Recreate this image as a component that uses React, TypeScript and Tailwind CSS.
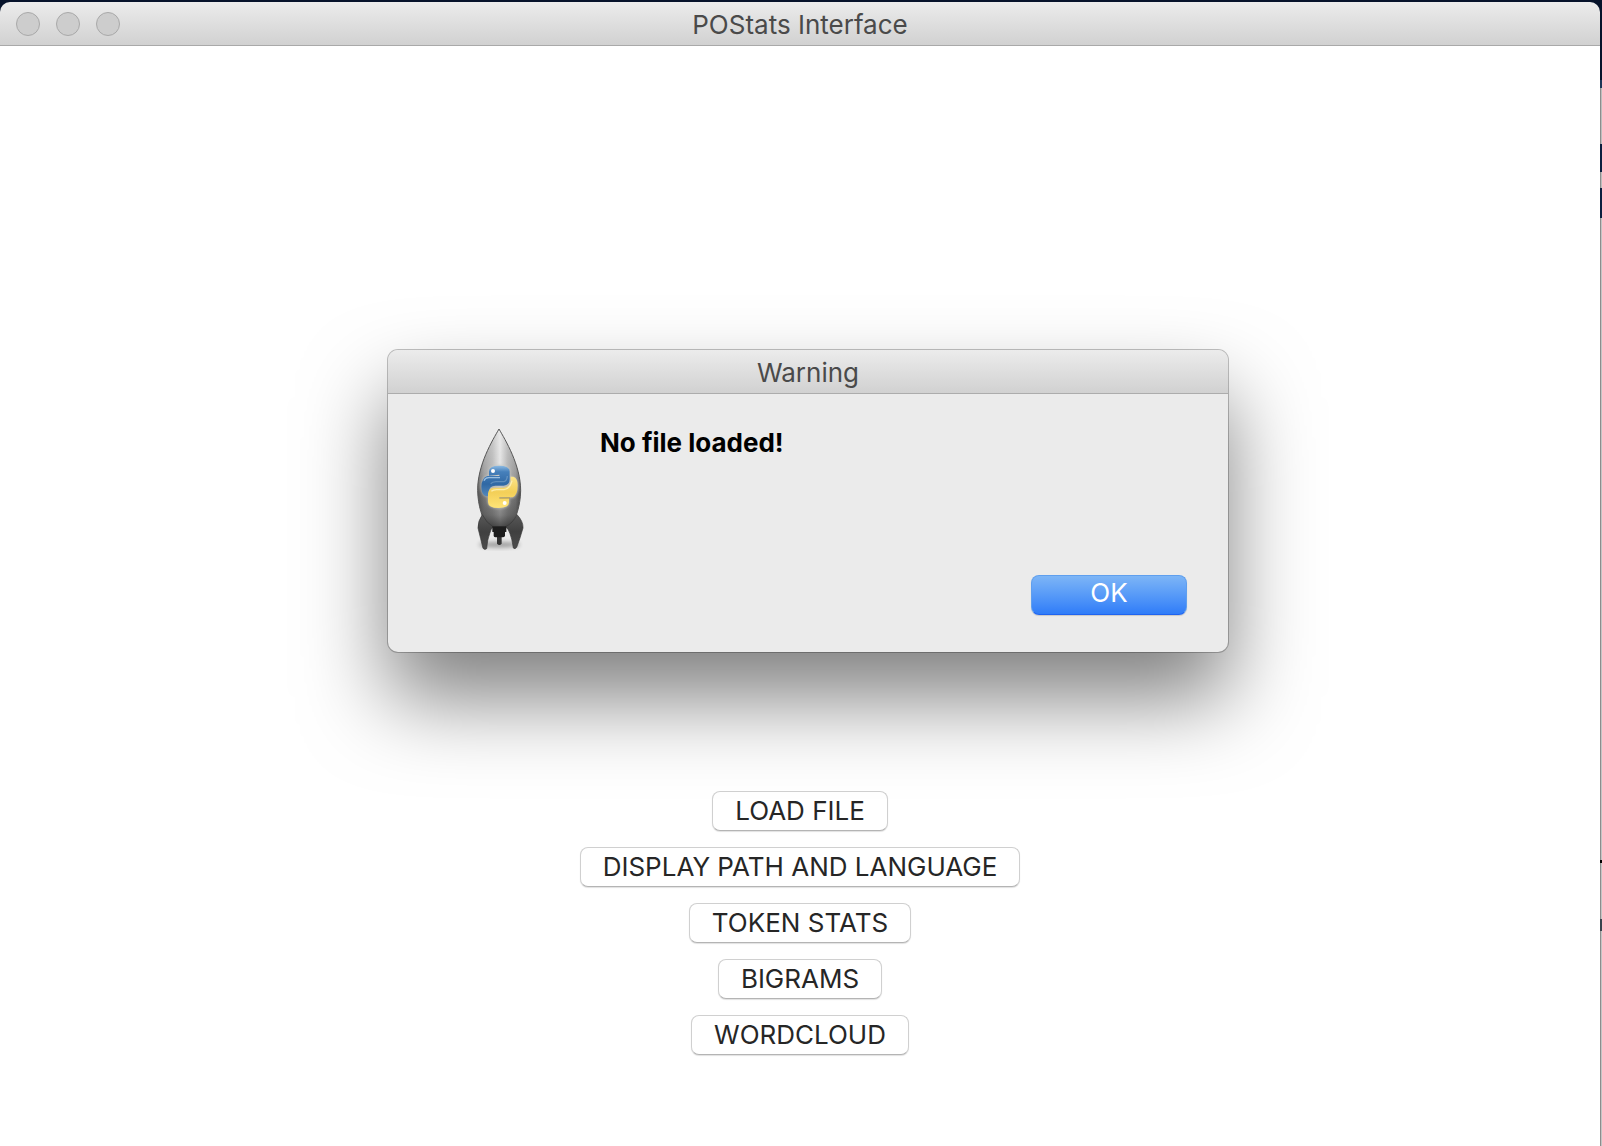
const actions = [
  "LOAD FILE",
  "DISPLAY PATH AND LANGUAGE",
  "TOKEN STATS",
  "BIGRAMS",
  "WORDCLOUD",
];

function TrafficLight({ label }: { label: string }) {
  return (
    <button
      type="button"
      aria-label={label}
      className="size-6 rounded-full border border-[#a9a9a9] bg-[#cdcdcd]"
    />
  );
}

function RocketIcon() {
  return (
    <svg viewBox="69 51 159 378" className="h-[126px] w-[53px]" role="img" aria-label="Python launcher">
      <defs>
        <linearGradient id="hull" x1="0" x2="1" y1="0" y2="0">
          <stop offset="0" stopColor="#6a6a6a" />
          <stop offset="0.15" stopColor="#989898" />
          <stop offset="0.35" stopColor="#b4b4b4" />
          <stop offset="0.52" stopColor="#e0e0e0" />
          <stop offset="0.7" stopColor="#acacac" />
          <stop offset="0.88" stopColor="#909090" />
          <stop offset="1" stopColor="#5a5a5a" />
        </linearGradient>
        <linearGradient id="shade" x1="0" x2="0" y1="0" y2="1">
          <stop offset="0" stopColor="#ffffff" stopOpacity="0.3" />
          <stop offset="0.4" stopColor="#ffffff" stopOpacity="0.12" />
          <stop offset="0.65" stopColor="#303030" stopOpacity="0.3" />
          <stop offset="0.88" stopColor="#262626" stopOpacity="0.5" />
          <stop offset="1" stopColor="#1c1c1c" stopOpacity="0.75" />
        </linearGradient>
        <linearGradient id="fin" x1="0" x2="0" y1="0" y2="1">
          <stop offset="0" stopColor="#585858" />
          <stop offset="0.5" stopColor="#404040" />
          <stop offset="1" stopColor="#4c4c4c" />
        </linearGradient>
        <linearGradient id="blue" x1="0" x2="0" y1="0" y2="1">
          <stop offset="0" stopColor="#8dbbe3" />
          <stop offset="0.2" stopColor="#4680bb" />
          <stop offset="0.6" stopColor="#3068a4" />
          <stop offset="1" stopColor="#5488bb" />
        </linearGradient>
        <linearGradient id="yellow" x1="0" x2="0" y1="0" y2="1">
          <stop offset="0" stopColor="#fbe48a" />
          <stop offset="0.5" stopColor="#f3cf58" />
          <stop offset="1" stopColor="#ffe477" />
        </linearGradient>
        <filter id="soft" x="-50%" y="-50%" width="200%" height="200%">
          <feGaussianBlur stdDeviation="7" />
        </filter>
        <filter id="glow" x="-20%" y="-20%" width="140%" height="140%">
          <feGaussianBlur stdDeviation="3" />
        </filter>
      </defs>
      <ellipse cx="148" cy="404" rx="62" ry="9" fill="#000000" opacity="0.32" filter="url(#soft)" />
      <path d="M141 376h14v25q-7 8-14 0z" fill="#343434" />
      <path
        d="M147 57C128 90 82 165 83 242C84 288 97 324 112 350H183C198 324 211 288 212 242C212 165 166 90 147 57Z"
        fill="url(#hull)"
      />
      <path
        d="M147 57C128 90 82 165 83 242C84 288 97 324 112 350H183C198 324 211 288 212 242C212 165 166 90 147 57Z"
        fill="url(#shade)"
        stroke="#575757"
        strokeWidth="3"
      />
      <path
        d="M97 314Q83 334 84 354Q92 386 99 415Q104 421 110 416Q112 388 119 371Q122 358 129 350Q110 340 97 314Z"
        fill="url(#fin)"
        stroke="#363636"
        strokeWidth="2"
      />
      <path
        d="M201 314Q220 334 219 354Q210 386 200 412Q195 419 190 414Q186 386 180 371Q176 358 167 350Q188 340 201 314Z"
        fill="url(#fin)"
        stroke="#363636"
        strokeWidth="2"
      />
      <path d="M127 349h42v17h-4v12q-2 4-7 4h-21q-5 0-6-4v-12h-4z" fill="#1d1d1d" />
      <path
        d="M115 192V184Q115 164 147 164Q181 164 181 186V198Q203 202 205 228Q205 260 187 265H179V276Q179 296 147 296Q112 296 112 274V262Q94 260 92 232Q92 202 112 195Z"
        fill="#c9c9c2"
        opacity="0.65"
        filter="url(#glow)"
      />
      <path
        d="M117 197V184Q117 167 147 167Q179 167 179 184V208Q179 226 161 227H136Q118 228 117 244V259H108Q94 255 94 230Q95 203 112 198H148V194Z"
        fill="url(#blue)"
      />
      <path
        d="M177 264V277Q177 294 146 294Q114 294 114 276V250Q116 234 133 233H160Q179 232 182 216V200H190Q203 203 203 226Q203 256 188 262H148V265Z"
        fill="url(#yellow)"
      />
      <path d="M102 212Q105 204 116 203H150" fill="none" stroke="#b9d8f0" strokeWidth="4" opacity="0.75" />
      <path d="M124 244Q130 239 140 239H162Q180 237 186 212" fill="none" stroke="#fff3bb" strokeWidth="4" opacity="0.8" />
      <path d="M122 221Q127 216 138 215H162Q171 213 172 198" fill="none" stroke="#89afd1" strokeWidth="4" opacity="0.5" />
      <path d="M148 264H180" stroke="#a8924a" strokeWidth="3" />
      <circle cx="129" cy="183" r="6" fill="#ffffff" />
      <circle cx="164" cy="279" r="6" fill="#ffffff" />
    </svg>
  );
}

/* Slivers of the windows that lie behind the right edge */
function DesktopEdge() {
  return (
    <div aria-hidden="true" className="flex w-0.5 shrink-0 flex-col overflow-hidden">
      <div className="h-[78px] bg-[#07132b]" />
      <div className="h-2 bg-[#1d3557]" />
      <div className="h-14 border-l border-[#8d8d8d] bg-[#bdbdbd]" />
      <div className="h-7 bg-[#0b1f3f]" />
      <div className="h-4 border-l border-[#8d8d8d] bg-[#bdbdbd]" />
      <div className="h-[30px] bg-[#0b1f3f]" />
      <div className="h-[642px] border-l border-[#8d8d8d] bg-[#c4c4c4]" />
      <div className="h-[3px] bg-black" />
      <div className="h-14 border-l border-[#8d8d8d] bg-[#c4c4c4]" />
      <div className="h-3 bg-[#39434d]" />
      <div className="flex-1 border-l border-[#8d8d8d] bg-[#c4c4c4]" />
    </div>
  );
}

export default function App() {
  return (
    <div className="flex min-h-screen bg-[#07132b] pt-0.5 font-['Inter',sans-serif] text-[26px] leading-8">
      <div className="relative flex flex-1 flex-col">
        <header className="grid h-11 grid-cols-[1fr_auto_1fr] items-center rounded-t-[10px] border-b border-[#a9a9a9] bg-linear-to-b from-[#ececec] to-[#d1d1d1] px-4">
          <div className="flex gap-4">
            <TrafficLight label="Close" />
            <TrafficLight label="Minimize" />
            <TrafficLight label="Zoom" />
          </div>
          <h1 className="pt-0.5 text-[#4a4a4a]">POStats Interface</h1>
        </header>

        <main className="flex flex-1 flex-col items-center justify-end gap-4 bg-white pb-[91px]">
          {actions.map((label) => (
            <button
              key={label}
              type="button"
              className="h-10 rounded-lg border border-[#d0d0d0] border-b-[#b4b4b4] bg-white px-[22px] text-[#262626] shadow-[0_1px_1px_rgba(0,0,0,0.12)]"
            >
              {label}
            </button>
          ))}
        </main>

        <div className="absolute inset-x-0 top-[348px] flex justify-center pl-4">
          <div
            role="alertdialog"
            aria-labelledby="dialog-title"
            aria-describedby="dialog-message"
            className="w-[840px] rounded-[10px] bg-[#ebebeb] shadow-[0_0_0_1px_rgba(0,0,0,0.24),0_46px_84px_rgba(0,0,0,0.5)]"
          >
            <h2
              id="dialog-title"
              className="flex h-11 items-center justify-center rounded-t-[10px] border-b border-[#acacac] bg-linear-to-b from-[#ececec] to-[#d1d1d1] pt-0.5 text-[#4a4a4a]"
            >
              Warning
            </h2>
            <div className="flex items-start pt-[33px] pl-[85px]">
              <RocketIcon />
              <p id="dialog-message" className="ml-[74px] font-bold text-black">
                No file loaded!
              </p>
            </div>
            <div className="flex justify-end px-[41px] pt-[22px] pb-[37px]">
              <button
                type="button"
                className="h-10 w-[156px] rounded-lg border border-[#5f9fee] border-b-[#1f63f0] bg-linear-to-b from-[#7db5f6] to-[#2f7cf8] pb-1 text-white shadow-[0_1px_1px_rgba(0,0,0,0.15)]"
              >
                OK
              </button>
            </div>
          </div>
        </div>
      </div>
      <DesktopEdge />
    </div>
  );
}
